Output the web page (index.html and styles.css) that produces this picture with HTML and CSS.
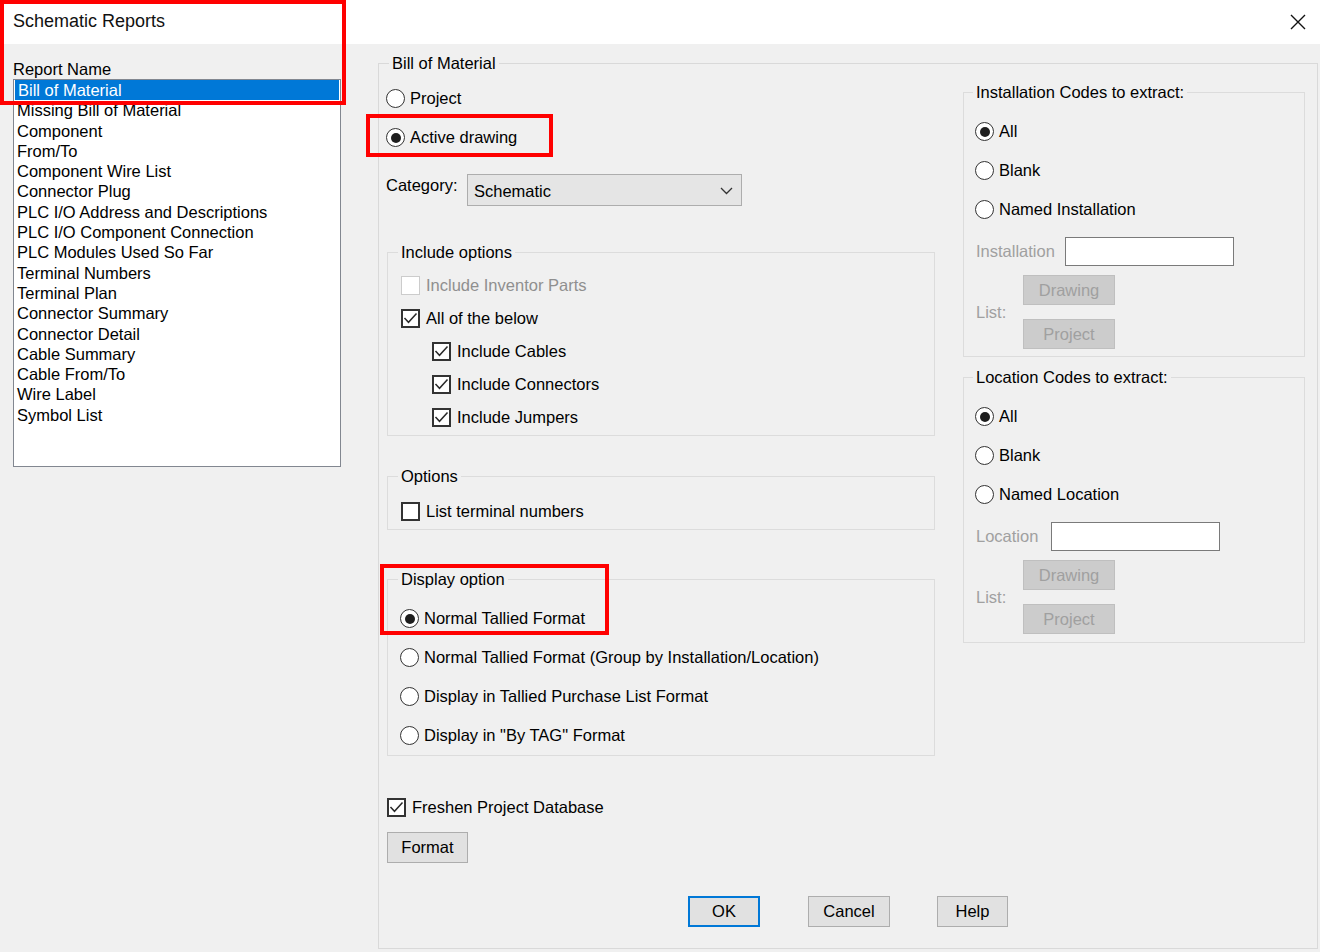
FILE: index.html
```html
<!DOCTYPE html>
<html>
<head>
<meta charset="utf-8">
<title>Schematic Reports</title>
<link rel="stylesheet" href="styles.css">
</head>
<body>
<div class="window">
  <div class="titlebar">
    <span class="title">Schematic Reports</span>
    <svg class="close" width="16" height="16" viewBox="0 0 16 16"><path d="M1 1L15 15M15 1L1 15" stroke="#111" stroke-width="1.4" fill="none"/></svg>
  </div>
  <div class="main">
    <div class="left">
      <div class="lbl-report">Report Name</div>
      <div class="listbox">
        <div class="item selected">Bill of Material</div>
        <div class="item">Missing Bill of Material</div>
        <div class="item">Component</div>
        <div class="item">From/To</div>
        <div class="item">Component Wire List</div>
        <div class="item">Connector Plug</div>
        <div class="item">PLC I/O Address and Descriptions</div>
        <div class="item">PLC I/O Component Connection</div>
        <div class="item">PLC Modules Used So Far</div>
        <div class="item">Terminal Numbers</div>
        <div class="item">Terminal Plan</div>
        <div class="item">Connector Summary</div>
        <div class="item">Connector Detail</div>
        <div class="item">Cable Summary</div>
        <div class="item">Cable From/To</div>
        <div class="item">Wire Label</div>
        <div class="item">Symbol List</div>
      </div>
    </div>
    <div class="right">
      <fieldset class="group bom">
        <legend class="bom-legend">Bill of Material</legend>
        <div class="bom-cols">
          <div class="col-left">
            <div class="opt r39"><span class="radio"></span>Project</div>
            <div class="opt r39"><span class="radio on"></span>Active drawing</div>
            <div class="category">
              <span class="cat-label">Category:</span>
              <div class="select"><span>Schematic</span><svg width="13" height="8" viewBox="0 0 13 8"><path d="M1 1L6.5 6.5L12 1" stroke="#333" stroke-width="1.3" fill="none"/></svg></div>
            </div>
            <fieldset class="group inc">
              <legend>Include options</legend>
              <div class="opt r33 disabled"><span class="check dis"></span>Include Inventor Parts</div>
              <div class="opt r33"><span class="check"><svg width="15" height="15" viewBox="0 0 15 15"><path d="M1.5 7L5.5 11.3L13.5 2.5" stroke="#2a2a2a" stroke-width="1.5" fill="none"/></svg></span>All of the below</div>
              <div class="opt r33 sub"><span class="check"><svg width="15" height="15" viewBox="0 0 15 15"><path d="M1.5 7L5.5 11.3L13.5 2.5" stroke="#2a2a2a" stroke-width="1.5" fill="none"/></svg></span>Include Cables</div>
              <div class="opt r33 sub"><span class="check"><svg width="15" height="15" viewBox="0 0 15 15"><path d="M1.5 7L5.5 11.3L13.5 2.5" stroke="#2a2a2a" stroke-width="1.5" fill="none"/></svg></span>Include Connectors</div>
              <div class="opt r33 sub"><span class="check"><svg width="15" height="15" viewBox="0 0 15 15"><path d="M1.5 7L5.5 11.3L13.5 2.5" stroke="#2a2a2a" stroke-width="1.5" fill="none"/></svg></span>Include Jumpers</div>
            </fieldset>
            <fieldset class="group opts">
              <legend>Options</legend>
              <div class="opt r33"><span class="check"></span>List terminal numbers</div>
            </fieldset>
            <fieldset class="group disp">
              <legend>Display option</legend>
              <div class="opt r39"><span class="radio on"></span>Normal Tallied Format</div>
              <div class="opt r39"><span class="radio"></span>Normal Tallied Format (Group by Installation/Location)</div>
              <div class="opt r39"><span class="radio"></span>Display in Tallied Purchase List Format</div>
              <div class="opt r39"><span class="radio"></span>Display in "By TAG" Format</div>
            </fieldset>
            <div class="opt r33 freshen"><span class="check"><svg width="15" height="15" viewBox="0 0 15 15"><path d="M1.5 7L5.5 11.3L13.5 2.5" stroke="#2a2a2a" stroke-width="1.5" fill="none"/></svg></span>Freshen Project Database</div>
            <button class="btn format">Format</button>
          </div>
          <div class="col-right">
            <fieldset class="group codes inst">
              <legend>Installation Codes to extract:</legend>
              <div class="opt r39"><span class="radio on"></span>All</div>
              <div class="opt r39"><span class="radio"></span>Blank</div>
              <div class="opt r39"><span class="radio"></span>Named Installation</div>
              <div class="field-row"><span class="dis-label lbl-inst">Installation</span><span class="textbox"></span></div>
              <div class="list-row">
                <span class="dis-label">List:</span>
                <div class="list-btns"><button class="btn off">Drawing</button><button class="btn off">Project</button></div>
              </div>
            </fieldset>
            <fieldset class="group codes loc">
              <legend>Location Codes to extract:</legend>
              <div class="opt r39"><span class="radio on"></span>All</div>
              <div class="opt r39"><span class="radio"></span>Blank</div>
              <div class="opt r39"><span class="radio"></span>Named Location</div>
              <div class="field-row"><span class="dis-label lbl-loc">Location</span><span class="textbox"></span></div>
              <div class="list-row">
                <span class="dis-label">List:</span>
                <div class="list-btns"><button class="btn off">Drawing</button><button class="btn off">Project</button></div>
              </div>
            </fieldset>
          </div>
        </div>
        <div class="actions">
          <button class="btn ok">OK</button>
          <button class="btn cancel">Cancel</button>
          <button class="btn help">Help</button>
        </div>
      </fieldset>
    </div>
  </div>
  <div class="anno anno-title"></div>
  <div class="anno anno-active"></div>
  <div class="anno anno-display"></div>
</div>
</body>
</html>
```

FILE: styles.css
```css
* { box-sizing: border-box; }
html, body { margin: 0; padding: 0; }
body {
  width: 1320px;
  height: 952px;
  overflow: hidden;
  background: #f0f0f0;
  font-family: "Liberation Sans", Arial, sans-serif;
  font-size: 16.5px;
  color: #000;
}
.window { position: relative; width: 1320px; height: 952px; }

.titlebar {
  height: 44px;
  background: #fff;
  display: flex;
  align-items: center;
  justify-content: space-between;
  padding: 0 14px 2px 13px;
}
.title { font-size: 18px; color: #111; }
.close { display: block; margin-top: 1px; }

.main { display: flex; height: 908px; }

.left { width: 378px; padding: 15px 0 0 13px; }
.lbl-report { line-height: 20px; height: 20px; }
.listbox {
  width: 328px;
  height: 388px;
  background: #fff;
  border: 1px solid #828790;
  padding: 0 1px;
}
.item { line-height: 20.3px; height: 20.3px; padding-left: 2px; white-space: nowrap; }
.item.selected { background: #0078d7; color: #fff; padding-left: 3px; }

.right { padding: 10px 0 0 0; }

.group {
  margin: 0;
  border: 1px solid #dcdcdc;
  min-width: 0;
}
.group legend {
  padding: 0 3px;
  margin-left: -3px;
  line-height: 19px;
  height: 19px;
}

.bom {
  width: 940px;
  height: 895px;
  padding: 0 12px 0 8px;
  border-color: #d9d9d9;
}
.bom .bom-legend { margin-left: 2px; }

.bom-cols { display: flex; gap: 28px; }
.col-left { width: 548px; padding-top: 6px; }
.col-right { width: 342px; padding-top: 10px; }

.opt { display: flex; align-items: center; white-space: nowrap; }
.r39 { height: 39px; }
.r33 { height: 33px; }
.opt.sub { margin-left: 31px; }
.opt.disabled { color: #8f8f8f; }

.radio {
  width: 19px; height: 19px;
  border: 1.8px solid #333;
  border-radius: 50%;
  background: #fff;
  margin-right: 5px;
  margin-left: -1px;
  display: flex; align-items: center; justify-content: center;
  flex: none;
}
.radio.on::after {
  content: "";
  width: 10px; height: 10px;
  border-radius: 50%;
  background: #1e1e1e;
}
.check {
  width: 19px; height: 19px;
  border: 2px solid #333;
  background: #fff;
  margin-right: 6px;
  display: flex; align-items: center; justify-content: center;
  flex: none;
}
.check svg { display: block; }
.check.dis { border-color: #cccccc; border-width: 1.5px; }

.category { display: flex; align-items: flex-start; margin-top: 17px; }
.cat-label { width: 81px; margin-left: -1px; margin-top: 2px; line-height: 19px; }
.select {
  width: 275px; height: 32px;
  background: #e5e5e5;
  border: 1px solid #adadad;
  display: flex; align-items: center; justify-content: space-between;
  padding: 2px 8px 0 6px;
}

.inc { margin-top: 37px; padding: 7px 12px 1px 13px; }
.opts { margin-top: 31px; padding: 9px 12px 1px 13px; }
.disp { margin-top: 40px; padding: 10px 12px 0 13px; }
.freshen { margin-top: 35px; }

.btn {
  font-family: "Liberation Sans", Arial, sans-serif;
  font-size: 16.5px;
  color: #000;
  background: #e1e1e1;
  border: 1px solid #adadad;
  padding: 0;
  display: flex; align-items: center; justify-content: center;
}
.format { width: 81px; height: 31px; margin-top: 8px; }

.actions { display: flex; padding-left: 301px; margin-top: 33px; }
.ok { width: 72px; height: 31px; border: 2px solid #0078d7; }
.cancel { width: 82px; height: 31px; margin-left: 48px; }
.help { width: 71px; height: 31px; margin-left: 47px; }

.codes { padding: 10px 10px 7px 12px; }
.loc { margin-top: 11px; padding-bottom: 8px; }

.dis-label { color: #a0a0a0; white-space: nowrap; }
.lbl-inst { width: 89px; }
.lbl-loc { width: 75px; }
.field-row { display: flex; align-items: center; margin-top: 8px; height: 29px; }
.textbox { width: 169px; height: 29px; background: #fff; border: 1.5px solid #7a7a7a; }
.list-row { display: flex; align-items: center; margin-top: 9px; }
.list-row .dis-label { width: 47px; }
.list-btns { display: flex; flex-direction: column; gap: 14px; }
.btn.off {
  width: 92px; height: 30px;
  background: #cccccc;
  border-color: #bfbfbf;
  color: #a0a0a0;
}

.anno { position: absolute; border: 4.5px solid #ff0000; }
.anno-title { left: 0; top: 0; width: 346px; height: 105px; }
.anno-active { left: 366px; top: 114px; width: 187px; height: 43px; }
.anno-display { left: 380px; top: 564px; width: 229px; height: 71px; }
```
